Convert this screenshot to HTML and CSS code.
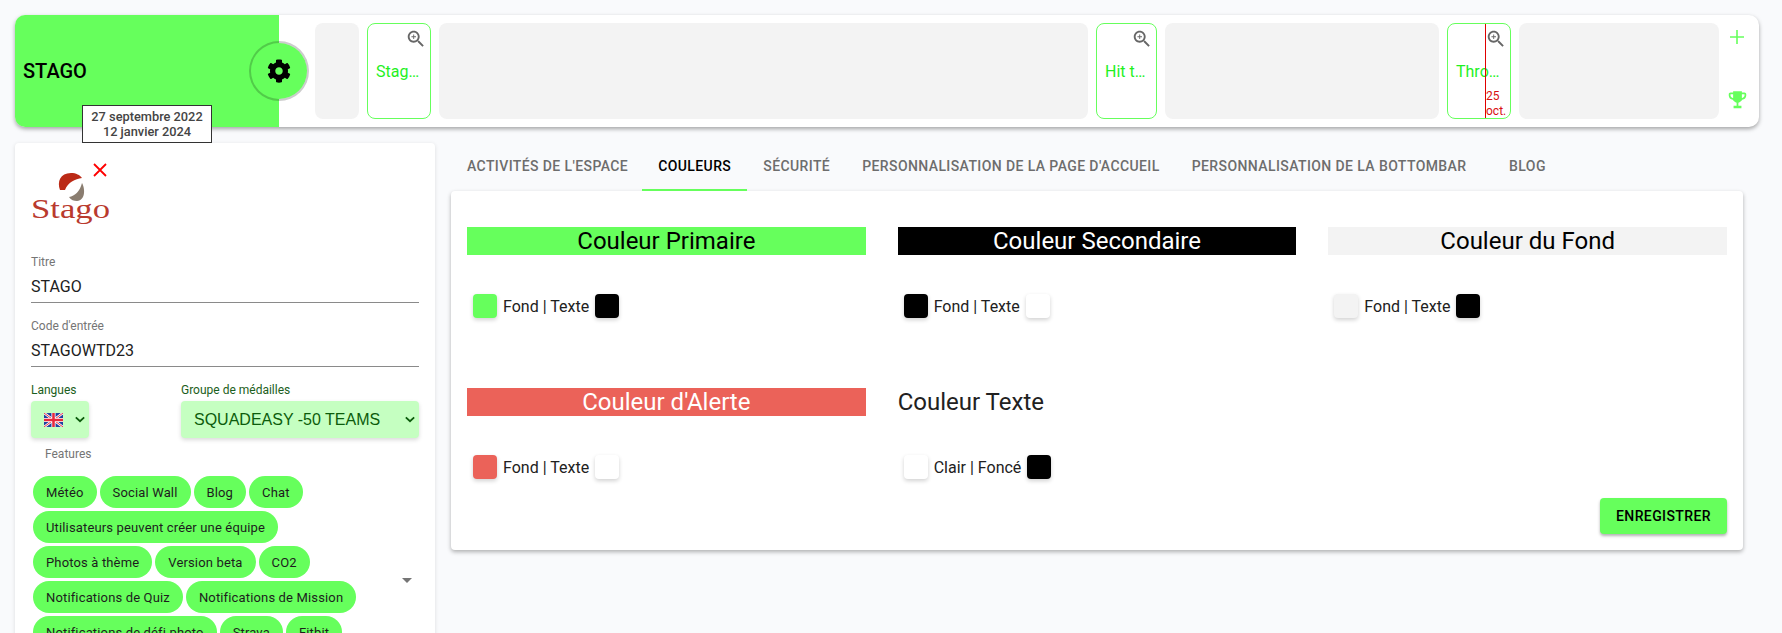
FILE: index.html
```html
<!DOCTYPE html>
<html lang="en">
<head>
    <meta charset="UTF-8">
    <title>STAGO</title>
    <link rel="stylesheet" href="styles.css">
</head>
<body>

    <!-- Top bar with timeline -->
    <header class="topbar">
        <div class="brand">
            <span class="brand-name">STAGO</span>
            <div class="gear">
                <svg viewBox="0 0 512 512" width="24" height="24"><path d="M487.4 315.7l-42.6-24.6c4.3-23.2 4.3-47 0-70.2l42.6-24.6c4.9-2.8 7.1-8.6 5.5-14-11.1-35.6-30-67.8-54.7-94.6-3.8-4.1-10-5.1-14.8-2.3L380.8 110c-17.9-15.4-38.5-27.3-60.8-35.1V25.8c0-5.6-3.9-10.5-9.4-11.7-36.7-8.2-74.3-7.8-109.2 0-5.5 1.2-9.4 6.1-9.4 11.7V75c-22.2 7.9-42.8 19.8-60.8 35.1L88.7 85.5c-4.9-2.8-11-1.9-14.8 2.3-24.7 26.7-43.6 58.9-54.7 94.6-1.7 5.4.6 11.2 5.5 14L67.3 221c-4.3 23.2-4.3 47 0 70.2l-42.6 24.6c-4.9 2.8-7.1 8.6-5.5 14 11.1 35.6 30 67.8 54.7 94.6 3.8 4.1 10 5.1 14.8 2.3l42.6-24.6c17.9 15.4 38.5 27.3 60.8 35.1v49.2c0 5.6 3.9 10.5 9.4 11.7 36.7 8.2 74.3 7.8 109.2 0 5.5-1.2 9.4-6.1 9.4-11.7v-49.2c22.2-7.9 42.8-19.8 60.8-35.1l42.6 24.6c4.9 2.8 11 1.9 14.8-2.3 24.7-26.7 43.6-58.9 54.7-94.6 1.5-5.5-.7-11.3-5.6-14.1zM256 336c-44.1 0-80-35.9-80-80s35.9-80 80-80 80 35.9 80 80-35.9 80-80 80z"/></svg>
            </div>
            <div class="dates">27 septembre 2022<br>12 janvier 2024</div>
        </div>

        <div class="timeline">
            <div class="slot slot-a"></div>
            <div class="mission mission-a">
                <svg class="zoom-icon" viewBox="0 0 24 24"><path d="M15.5 14h-.79l-.28-.27C15.41 12.59 16 11.11 16 9.5 16 5.91 13.09 3 9.5 3S3 5.91 3 9.5 5.91 16 9.5 16c1.61 0 3.09-.59 4.23-1.57l.27.28v.79l5 4.99L20.49 19l-4.99-5zm-6 0C7.01 14 5 11.99 5 9.5S7.01 5 9.5 5 14 7.01 14 9.5 11.99 14 9.5 14z"/><path d="M12 10h-2v2H9v-2H7V9h2V7h1v2h2v1z"/></svg>
                Stag…
            </div>
            <div class="slot slot-b"></div>
            <div class="mission mission-b">
                <svg class="zoom-icon" viewBox="0 0 24 24"><path d="M15.5 14h-.79l-.28-.27C15.41 12.59 16 11.11 16 9.5 16 5.91 13.09 3 9.5 3S3 5.91 3 9.5 5.91 16 9.5 16c1.61 0 3.09-.59 4.23-1.57l.27.28v.79l5 4.99L20.49 19l-4.99-5zm-6 0C7.01 14 5 11.99 5 9.5S7.01 5 9.5 5 14 7.01 14 9.5 11.99 14 9.5 14z"/><path d="M12 10h-2v2H9v-2H7V9h2V7h1v2h2v1z"/></svg>
                Hit t…
            </div>
            <div class="slot slot-c"></div>
            <div class="mission mission-a">
                <svg class="zoom-icon" viewBox="0 0 24 24"><path d="M15.5 14h-.79l-.28-.27C15.41 12.59 16 11.11 16 9.5 16 5.91 13.09 3 9.5 3S3 5.91 3 9.5 5.91 16 9.5 16c1.61 0 3.09-.59 4.23-1.57l.27.28v.79l5 4.99L20.49 19l-4.99-5zm-6 0C7.01 14 5 11.99 5 9.5S7.01 5 9.5 5 14 7.01 14 9.5 11.99 14 9.5 14z"/><path d="M12 10h-2v2H9v-2H7V9h2V7h1v2h2v1z"/></svg>
                Thro…
                <div class="today">25 oct.</div>
            </div>
            <div class="slot slot-d"></div>
        </div>

        <div class="actions">
            <svg viewBox="0 0 14 14" width="14" height="14"><path d="M7 0v14M0 7h14" stroke="#66ff5c" stroke-width="1.6" fill="none"/></svg>
            <svg viewBox="0 0 24 24" width="21" height="21"><path fill="#66ff5c" d="M20 4h-3V2.5H7V4H4C2.9 4 2 4.9 2 6v1.5c0 2.6 2 4.7 4.6 4.9 1 1.7 2.6 2.9 4.4 3.3V19H7.500v3h9v-3H13v-3.300c1.800-.4 3.400-1.600 4.400-3.300 2.600-.2 4.600-2.300 4.600-4.900V6c0-1.100-.9-2-2-2zM4 7.500V6h3v4.300C5.300 10 4 8.900 4 7.500zm16 0c0 1.400-1.300 2.500-3 2.800V6h3v1.500z"/></svg>
        </div>
    </header>

    <div class="main">
        <!-- Left settings card -->
        <aside class="settings">
            <div class="logo">
                <svg viewBox="0 0 90 70" width="90" height="70">
                    <path fill="#bb2a16" d="M29 30C26 22 29 13 40 13C45 13 49 15 51 18C44 19 37 22 34 30Z"/>
                    <path fill="#8a7d70" d="M51 23C54 28 55 40 46 41C43 41 40 40 38 37C44 36 49 31 51 23Z"/>
                    <text x="0" y="58" class="logo-text" textLength="79" lengthAdjust="spacingAndGlyphs">Stago</text>
                </svg>
                <svg class="logo-remove" viewBox="0 0 14 14" width="14" height="14"><path d="M1 1l12 12M13 1L1 13" stroke="#ff0000" stroke-width="1.8" fill="none"/></svg>
            </div>

            <div class="field">
                <label>Titre</label>
                <div class="field-value">STAGO</div>
            </div>
            <div class="field">
                <label>Code d'entrée</label>
                <div class="field-value">STAGOWTD23</div>
            </div>

            <div class="selects">
                <div class="select-group select-lang">
                    <label>Langues</label>
                    <div class="select-box">
                        <svg class="flag" viewBox="0 0 60 44" width="19" height="14">
                            <rect width="60" height="44" fill="#1f3f9f"/>
                            <path d="M0 0L60 44M60 0L0 44" stroke="#fff" stroke-width="8"/>
                            <path d="M0 0L60 44M60 0L0 44" stroke="#e8283c" stroke-width="3"/>
                            <path d="M30 0V44M0 22H60" stroke="#fff" stroke-width="13"/>
                            <path d="M30 0V44M0 22H60" stroke="#e8283c" stroke-width="8"/>
                        </svg>
                        <svg class="chevron" viewBox="0 0 12 8" width="10" height="7"><path d="M1 1.500l5 4.500 5-4.500" stroke="#0c5c0c" stroke-width="2.200" fill="none"/></svg>
                    </div>
                </div>
                <div class="select-group select-medals">
                    <label>Groupe de médailles</label>
                    <div class="select-box">
                        <span>SQUADEASY -50 TEAMS</span>
                        <svg class="chevron" viewBox="0 0 12 8" width="10" height="7"><path d="M1 1.500l5 4.500 5-4.500" stroke="#0c5c0c" stroke-width="2.200" fill="none"/></svg>
                    </div>
                </div>
            </div>

            <div class="features-label">Features</div>
            <div class="chips">
                <span class="chip">Météo</span>
                <span class="chip">Social Wall</span>
                <span class="chip">Blog</span>
                <span class="chip">Chat</span>
                <span class="chip">Utilisateurs peuvent créer une équipe</span>
                <span class="chip">Photos à thème</span>
                <span class="chip">Version beta</span>
                <span class="chip">CO2</span>
                <span class="chip">Notifications de Quiz</span>
                <span class="chip">Notifications de Mission</span>
                <span class="chip">Notifications de défi photo</span>
                <span class="chip">Strava</span>
                <span class="chip">Fitbit</span>
                <div class="chips-arrow"></div>
            </div>
        </aside>

        <!-- Right panel with tabs -->
        <section class="content">
            <nav class="tabs">
                <a class="tab">ACTIVITÉS DE L'ESPACE</a>
                <a class="tab active">COULEURS</a>
                <a class="tab">SÉCURITÉ</a>
                <a class="tab">PERSONNALISATION DE LA PAGE D'ACCUEIL</a>
                <a class="tab">PERSONNALISATION DE LA BOTTOMBAR</a>
                <a class="tab">BLOG</a>
            </nav>

            <div class="panel">
                <div class="color-grid">
                    <div class="color-block">
                        <div class="color-title title-primary">Couleur Primaire</div>
                        <div class="swatch-row">
                            <span class="swatch sw-green"></span>
                            <span>Fond | Texte</span>
                            <span class="swatch sw-black"></span>
                        </div>
                    </div>
                    <div class="color-block">
                        <div class="color-title title-secondary">Couleur Secondaire</div>
                        <div class="swatch-row">
                            <span class="swatch sw-black"></span>
                            <span>Fond | Texte</span>
                            <span class="swatch sw-white"></span>
                        </div>
                    </div>
                    <div class="color-block">
                        <div class="color-title title-bg">Couleur du Fond</div>
                        <div class="swatch-row">
                            <span class="swatch sw-grey"></span>
                            <span>Fond | Texte</span>
                            <span class="swatch sw-black"></span>
                        </div>
                    </div>
                    <div class="color-block">
                        <div class="color-title title-alert">Couleur d'Alerte</div>
                        <div class="swatch-row">
                            <span class="swatch sw-red"></span>
                            <span>Fond | Texte</span>
                            <span class="swatch sw-white"></span>
                        </div>
                    </div>
                    <div class="color-block">
                        <div class="color-title title-text">Couleur Texte</div>
                        <div class="swatch-row">
                            <span class="swatch sw-white"></span>
                            <span>Clair | Foncé</span>
                            <span class="swatch sw-black"></span>
                        </div>
                    </div>
                </div>
                <div class="panel-footer">
                    <button type="button" class="btn">ENREGISTRER</button>
                </div>
            </div>
        </section>
    </div>

</body>
</html>
```

FILE: styles.css
```css
/* Global styles */
html, body {
    margin: 0;
    padding: 0;
    height: 633px;
    overflow: hidden;
}

body {
    box-sizing: border-box;
    padding: 15px 23px 0 15px;
    font-family: Roboto, sans-serif;
    background-color: #f9fafc;
    color: #212121;
}

/* Top bar */
.topbar {
    display: flex;
    height: 112px;
    background-color: #fff;
    border-radius: 10px;
    box-shadow: 0 2px 4px rgba(0, 0, 0, 0.35);
}

.brand {
    position: relative;
    display: flex;
    align-items: center;
    width: 264px;
    padding-left: 8px;
    box-sizing: border-box;
    background-color: #66ff5c;
    border-radius: 10px 0 0 10px;
}

.brand-name {
    font-size: 20px;
    font-weight: 500;
    color: #000;
}

.gear {
    position: absolute;
    left: 234px;
    top: 26px;
    width: 60px;
    height: 60px;
    box-sizing: border-box;
    display: flex;
    justify-content: center;
    align-items: center;
    background-color: #66ff5c;
    background-clip: padding-box;
    border: 2px solid rgba(0, 0, 0, 0.2);
    border-radius: 50%;
}

.dates {
    position: absolute;
    left: 67px;
    top: 90px;
    z-index: 5;
    width: 130px;
    height: 38px;
    box-sizing: border-box;
    padding-top: 3px;
    text-align: center;
    font-size: 12.8px;
    font-weight: 500;
    line-height: 15px;
    color: #444;
    background-color: #fff;
    border: 1px solid #333;
}

.timeline {
    display: flex;
    flex: 1;
    gap: 8px;
    padding: 8px 0 8px 36px;
}

.slot {
    background-color: #f3f3f3;
    border-radius: 8px;
}

.slot-a { width: 44px; }
.slot-b { width: 649px; }
.slot-c { width: 274px; }
.slot-d { width: 200px; }

.mission {
    position: relative;
    display: flex;
    align-items: center;
    box-sizing: border-box;
    padding-left: 8px;
    font-size: 16px;
    color: #1ff01f;
    background-color: #fff;
    border: 1px solid #66ff5c;
    border-radius: 8px;
}

.mission-a { width: 64px; }
.mission-b { width: 61px; }

.zoom-icon {
    position: absolute;
    top: 4px;
    right: 3px;
    width: 22px;
    height: 22px;
    fill: #666;
}

.today {
    position: absolute;
    left: 37px;
    top: 0;
    bottom: 0;
    width: 25px;
    box-sizing: border-box;
    padding-top: 65px;
    border-left: 1px solid #e00000;
    font-size: 12px;
    line-height: 15px;
    color: #d81010;
}

.actions {
    display: flex;
    flex-direction: column;
    align-items: center;
    justify-content: space-between;
    width: 36px;
    padding: 15px 0 17px;
    box-sizing: border-box;
    margin-right: 4px;
}

/* Page body */
.main {
    display: flex;
    gap: 16px;
    margin-top: 16px;
}

/* Left settings card */
.settings {
    width: 420px;
    height: 520px;
    box-sizing: border-box;
    padding: 17px 16px 0;
    background-color: #fff;
    border-radius: 4px;
    box-shadow: 0 1px 4px rgba(0, 0, 0, 0.12);
}

.logo {
    position: relative;
    height: 95px;
}

.logo svg {
    display: block;
}

.logo-text {
    font-family: "Liberation Serif", serif;
    font-size: 27px;
    fill: #b93a2e;
}

.logo .logo-remove {
    position: absolute;
    left: 62px;
    top: 3px;
}

.field {
    height: 47px;
    margin-bottom: 16px;
    border-bottom: 1px solid #8a8a8a;
}

.field label {
    display: block;
    font-size: 12px;
    line-height: 14px;
    color: #757575;
}

.field-value {
    margin-top: 8px;
    font-size: 16px;
    line-height: 20px;
}

.selects {
    display: flex;
    gap: 92px;
}

.select-group label {
    display: block;
    margin-bottom: 4px;
    font-size: 12px;
    line-height: 14px;
    color: #1b5e20;
}

.select-lang {
    width: 58px;
    flex: none;
}

.select-medals {
    flex: 1;
}

.select-box {
    display: flex;
    align-items: center;
    justify-content: space-between;
    height: 37px;
    box-sizing: border-box;
    padding: 0 4px 0 13px;
    font-family: "Liberation Sans", sans-serif;
    font-size: 16px;
    color: #0c5c0c;
    background-color: #c5ffc1;
    border-radius: 4px;
    box-shadow: 0 2px 4px rgba(0, 0, 0, 0.15);
}

.flag {
    flex: none;
}

.features-label {
    margin: 9px 0 15px 14px;
    font-size: 12px;
    line-height: 14px;
    color: #757575;
}

.chips {
    position: relative;
    display: flex;
    flex-wrap: wrap;
    gap: 3px;
    padding: 0 34px 0 2px;
}

.chip {
    display: flex;
    align-items: center;
    height: 32px;
    padding: 0 13px;
    font-size: 13px;
    letter-spacing: 0.15px;
    color: #1d1d1d;
    background-color: #66ff5c;
    border-radius: 16px;
}

.chips-arrow {
    position: absolute;
    left: 371px;
    top: 102px;
    border-top: 5px solid #757575;
    border-left: 5px solid transparent;
    border-right: 5px solid transparent;
}

/* Right panel */
.content {
    flex: 1;
    min-width: 0;
    margin-right: 16px;
}

.tabs {
    display: flex;
    height: 48px;
}

.tab {
    display: flex;
    align-items: center;
    justify-content: center;
    min-width: 90px;
    box-sizing: border-box;
    padding: 0 16px 2px;
    font-size: 14px;
    font-weight: 500;
    color: #6d6d6d;
    letter-spacing: 0.4px;
    white-space: nowrap;
}

.tab:first-child {
    padding-right: 14px;
}

.tab.active {
    color: #000;
    padding-bottom: 0;
    border-bottom: 2px solid #66ff5c;
}

.panel {
    padding: 36px 16px 16px;
    background-color: #fff;
    border-radius: 4px;
    box-shadow: 0 2px 4px rgba(0, 0, 0, 0.3);
}

.color-grid {
    display: grid;
    grid-template-columns: repeat(3, 1fr);
    column-gap: 32px;
    row-gap: 70px;
}

.color-title {
    height: 28px;
    margin-bottom: 39px;
    font-size: 24px;
    line-height: 28px;
    text-align: center;
}

.title-primary { background-color: #66ff5c; color: #000; }
.title-secondary { background-color: #000; color: #fff; }
.title-bg { background-color: #f3f3f3; color: #000; }
.title-alert { background-color: #eb6259; color: #fff; }
.title-text { text-align: left; }

.swatch-row {
    display: flex;
    align-items: center;
    gap: 6px;
    height: 24px;
    padding-left: 6px;
    font-size: 16px;
}

.swatch {
    width: 24px;
    height: 24px;
    border-radius: 4px;
    box-shadow: 0 2px 4px rgba(0, 0, 0, 0.18);
}

.sw-green { background-color: #66ff5c; }
.sw-black { background-color: #000; }
.sw-white { background-color: #fff; }
.sw-grey { background-color: #f3f3f3; }
.sw-red { background-color: #eb6259; }

.panel-footer {
    display: flex;
    justify-content: flex-end;
    margin-top: 19px;
}

.btn {
    width: 127px;
    height: 36px;
    padding: 0;
    font-family: Roboto, sans-serif;
    font-size: 14px;
    font-weight: 500;
    letter-spacing: 0.4px;
    color: #000;
    background-color: #66ff5c;
    border: none;
    border-radius: 4px;
    box-shadow: 0 2px 3px rgba(0, 0, 0, 0.3);
}
```
